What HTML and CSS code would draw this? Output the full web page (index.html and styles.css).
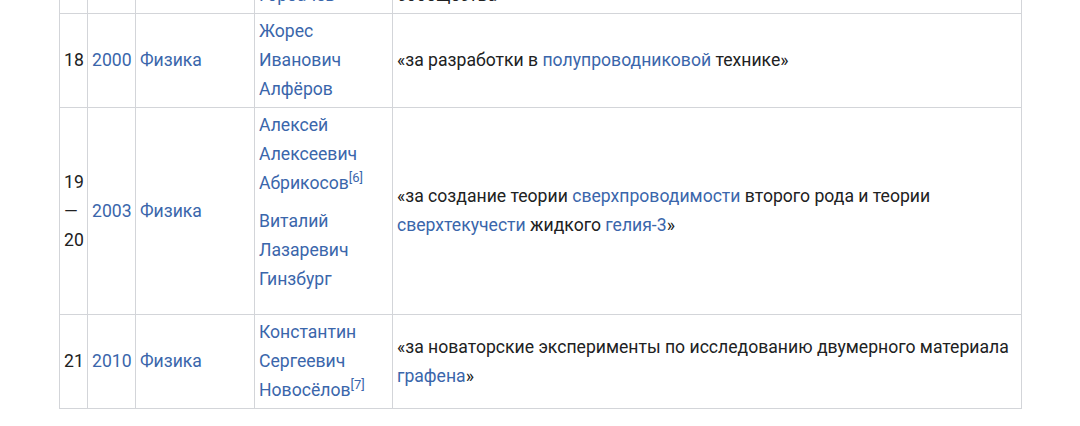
FILE: index.html
```html
<!DOCTYPE html>
<html lang="ru">
<head>
<meta charset="utf-8">
<title>Лауреаты</title>
<link rel="stylesheet" href="styles.css">
</head>
<body>
<table class="laureates">
  <colgroup>
    <col class="c-num">
    <col class="c-year">
    <col class="c-field">
    <col class="c-name">
    <col class="c-reason">
  </colgroup>
  <tbody>
    <tr>
      <td>17</td>
      <td><a href="#">1990</a></td>
      <td><a href="#">Мир</a></td>
      <td class="names"><a href="#">Михаил Сергеевич Горбачёв</a></td>
      <td>«за ведущую роль в мирном процессе, который сегодня характеризует важную составную часть жизни международного<br>сообщества»</td>
    </tr>
    <tr>
      <td>18</td>
      <td><a href="#">2000</a></td>
      <td><a href="#">Физика</a></td>
      <td class="names"><a href="#">Жорес Иванович Алфёров</a></td>
      <td>«за разработки в <a href="#">полупроводниковой</a> технике»</td>
    </tr>
    <tr>
      <td>19<br>—<br>20</td>
      <td><a href="#">2003</a></td>
      <td><a href="#">Физика</a></td>
      <td class="names">
        <div class="person first"><a href="#">Алексей Алексеевич Абрикосов</a><sup><a href="#">[6]</a></sup></div>
        <div class="person second"><a href="#">Виталий Лазаревич Гинзбург</a></div>
      </td>
      <td>«за создание теории <a href="#">сверхпроводимости</a> второго рода и теории <a href="#">сверхтекучести</a> жидкого <a href="#">гелия-3</a>»</td>
    </tr>
    <tr>
      <td>21</td>
      <td><a href="#">2010</a></td>
      <td><a href="#">Физика</a></td>
      <td class="names"><a href="#">Константин Сергеевич Новосёлов</a><sup><a href="#">[7]</a></sup></td>
      <td>«за новаторские эксперименты по исследованию двумерного материала <a href="#">графена</a>»</td>
    </tr>
  </tbody>
</table>
</body>
</html>
```

FILE: styles.css
```css
html, body {
  margin: 0;
  padding: 0;
  background: #ffffff;
}

body {
  font-family: Roboto, "Noto Sans", "Liberation Sans", sans-serif;
  font-size: 17.6px;
  line-height: 29px;
  color: #202122;
}

.laureates {
  border-collapse: collapse;
  table-layout: fixed;
  width: 962px;
  margin: -81px 0 0 59px;
}

.c-num { width: 28px; }
.c-year { width: 48px; }
.c-field { width: 119px; }
.c-name { width: 138px; }
.c-reason { width: 629px; }

.laureates td {
  border: 1px solid #d3d5d9;
  padding: 3px 4px;
  vertical-align: middle;
  text-align: left;
}

.laureates a {
  color: #3a66ab;
  text-decoration: none;
}

.laureates sup {
  font-size: 13px;
  line-height: 1;
  vertical-align: 7px;
}

.person.first {
  margin-bottom: 9px;
}

.person.second {
  margin-bottom: 17px;
}
```
